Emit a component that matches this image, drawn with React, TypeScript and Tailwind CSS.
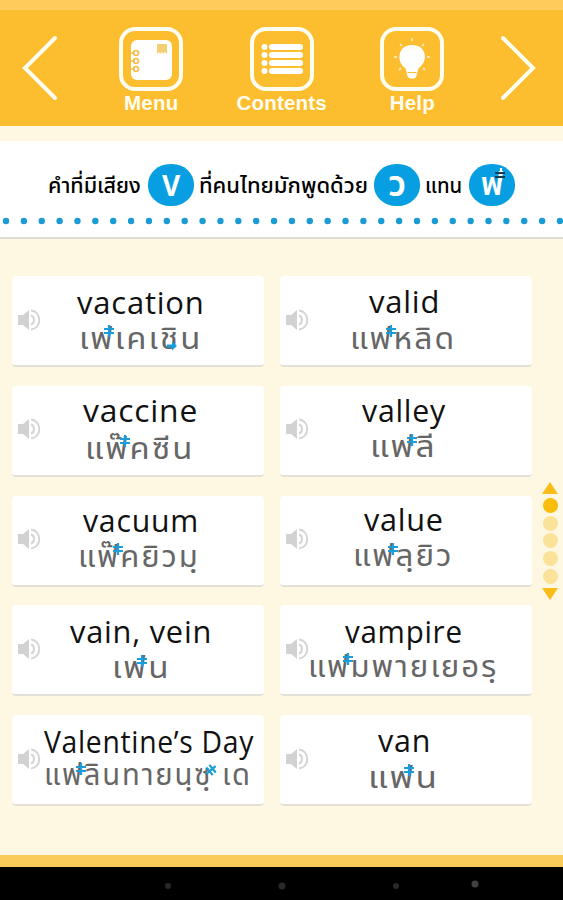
import { useLayoutEffect, useRef, useState } from "react";

interface Mark {
  x: number;
  y: number;
  kind?: "arrow" | "tilted";
}

interface Word {
  en: string;
  enX: number;
  enWidth: number;
  enTop: number;
  th: string;
  thX: number;
  thWidth: number;
  thTop: number;
  marks: Mark[];
}

// x and top values are relative to the card
const leftWords: Word[] = [
  {
    en: "vacation", enX: 65, enWidth: 128, enTop: 9,
    th: "เฟเคเชิน", thX: 67, thWidth: 123, thTop: 49,
    marks: [{ x: 97, y: 54 }, { x: 160, y: 69, kind: "arrow" }],
  },
  {
    en: "vaccine", enX: 71, enWidth: 115, enTop: 7,
    th: "แฟ๊คซีน", thX: 73, thWidth: 109, thTop: 49,
    marks: [{ x: 113, y: 54 }],
  },
  {
    en: "vacuum", enX: 71, enWidth: 116, enTop: 7,
    th: "แฟ๊คยิวมฺ", thX: 66, thWidth: 122, thTop: 47,
    marks: [{ x: 106, y: 52 }],
  },
  {
    en: "vain, vein", enX: 58, enWidth: 142, enTop: 9,
    th: "เฟน", thX: 100, thWidth: 59, thTop: 49,
    marks: [{ x: 130, y: 55 }],
  },
  {
    en: "Valentine’s Day", enX: 32, enWidth: 210, enTop: 9,
    th: "แฟลินทายนฺซฺ เด", thX: 32, thWidth: 208, thTop: 46,
    marks: [{ x: 69, y: 53 }, { x: 199, y: 54, kind: "tilted" }],
  },
];

const rightWords: Word[] = [
  {
    en: "valid", enX: 89, enWidth: 71, enTop: 8,
    th: "แฟหลิด", thX: 70, thWidth: 106, thTop: 49,
    marks: [{ x: 111, y: 54 }],
  },
  {
    en: "valley", enX: 82, enWidth: 84, enTop: 7,
    th: "แฟลี", thX: 90, thWidth: 67, thTop: 47,
    marks: [{ x: 132, y: 53 }],
  },
  {
    en: "value", enX: 84, enWidth: 80, enTop: 6,
    th: "แฟลฺยิว", thX: 73, thWidth: 101, thTop: 46,
    marks: [{ x: 113, y: 52 }],
  },
  {
    en: "vampire", enX: 65, enWidth: 118, enTop: 9,
    th: "แฟมพายเยอรฺ", thX: 28, thWidth: 190, thTop: 48,
    marks: [{ x: 68, y: 53 }],
  },
  {
    en: "van", enX: 98, enWidth: 53, enTop: 8,
    th: "แฟน", thX: 88, thWidth: 71, thTop: 49,
    marks: [{ x: 129, y: 54 }],
  },
];

// stretches a line of text to a given width
function FitText({ text, width }: { text: string; width: number }) {
  const ref = useRef<HTMLSpanElement>(null);
  const [scale, setScale] = useState(1);

  useLayoutEffect(() => {
    if (ref.current) setScale(width / ref.current.offsetWidth);
  }, [text, width]);

  return (
    <span className="block" style={{ width }}>
      <span
        ref={ref}
        className="inline-block origin-left whitespace-nowrap"
        style={{ transform: `scaleX(${scale})` }}
      >
        {text}
      </span>
    </span>
  );
}

function ToneMark({ x, y, kind }: Mark) {
  return (
    <svg
      className="absolute h-[13px] w-3 -translate-x-1/2"
      style={{ left: x, top: y - 5 }}
      viewBox="0 0 12 13"
      fill="none"
      stroke="#1a9dd9"
      strokeWidth="2.2"
    >
      {kind === "arrow" ? (
        <path d="M1 4.500h5V1.500l5 4.500-5 4.500V7.500H1z" fill="#1a9dd9" stroke="none" />
      ) : (
        <path
          d="M6 0v12M1 4h10M1 8h10"
          transform={kind === "tilted" ? "rotate(50 6 6)" : undefined}
        />
      )}
    </svg>
  );
}

function Speaker() {
  return (
    <svg className="h-[22px] w-[23px]" viewBox="0 0 23 22" fill="none">
      <path d="M0 6h5l6-5v20l-6-5H0z" fill="#d2d2d2" />
      <path
        d="M13 1.5c11 1 11 18 0 19M13 6.5c4 1 4 8 0 9"
        stroke="#d5d5d5"
        strokeWidth="2"
      />
    </svg>
  );
}

function WordCard({ word }: { word: Word }) {
  return (
    <div className="relative flex h-[91px] items-center rounded-sm border-b-2 border-[#e3e0d8] bg-white pb-0.5 pl-1.5">
      <Speaker />
      <div
        className="absolute font-['Open_Sans',sans-serif] text-[31px] leading-[34px] font-medium tracking-wide text-[#111]"
        style={{ left: word.enX, top: word.enTop }}
      >
        <FitText text={word.en} width={word.enWidth} />
      </div>
      <div
        className="absolute font-['Noto_Sans_Thai','Noto_Sans',sans-serif] text-[31px] leading-[30px] tracking-[2px] text-[#666]"
        style={{ left: word.thX, top: word.thTop }}
      >
        <FitText text={word.th} width={word.thWidth} />
      </div>
      {word.marks.map((mark) => (
        <ToneMark key={mark.x} {...mark} />
      ))}
    </div>
  );
}

function Arrow({ flip }: { flip?: boolean }) {
  return (
    <svg
      className={flip ? "h-[66px] w-9 -scale-x-100" : "h-[66px] w-9"}
      viewBox="0 0 36 66"
      fill="none"
      stroke="#fffdf0"
      strokeWidth="4"
      strokeLinecap="round"
    >
      <path d="M33 3 3 33l30 30" />
    </svg>
  );
}

function NavButton({ label, children }: { label: string; children: React.ReactNode }) {
  return (
    <button className="flex w-[130.500px] flex-col items-center">
      <svg className="h-16 w-16" viewBox="0 0 64 64" fill="none">
        <rect x="2" y="2" width="60" height="60" rx="14" stroke="#fffdf0" strokeWidth="4" />
        {children}
      </svg>
      <span className="font-['Liberation_Sans',sans-serif] text-[20.500px] leading-[23px] font-bold tracking-[0.2px] text-[#fffdf0]">
        {label}
      </span>
    </button>
  );
}

function Bubble({ children }: { children: React.ReactNode }) {
  return (
    <span className="relative flex h-[42px] w-[46px] shrink-0 items-center justify-center rounded-[48%] bg-[#079fe2] text-white">
      {children}
    </span>
  );
}

export default function App() {
  return (
    <main className="flex h-[900px] w-[563px] flex-col overflow-hidden bg-[#fef7e2]">
      <div className="h-2.5 bg-[#ffcc5c]" />
      <header className="flex h-[116px] items-start bg-[#fcbd2f] pt-[17px]">
        <div className="flex w-[86px] pt-2 pl-[22px]">
          <Arrow />
        </div>
        <NavButton label="Menu">
          <rect x="12" y="13" width="41" height="40" rx="6" fill="#fff" />
          <path d="M38 17h10v10l-2-2-2 2-1-2-2 2-1-2-2 2z" fill="#f5ce75" />
          <g stroke="#f3bd4c" strokeWidth="1.6">
            <circle cx="17" cy="26" r="2.5" />
            <circle cx="17" cy="34" r="2.5" />
            <circle cx="17" cy="42" r="2.5" />
            <path d="M11 26h5M11 34h5M11 42h5" />
          </g>
        </NavButton>
        <NavButton label="Contents">
          <g stroke="#fff" strokeWidth="6" strokeLinecap="round">
            <path d="M14.500 20h.01M22 20h28M14.500 28h.01M22 28h28M14.500 36h.01M22 36h28M14.500 44h.01M22 44h28" />
          </g>
        </NavButton>
        <NavButton label="Help">
          <path
            d="M32 18c-15 0-15 17-8 22 3 2 2 6 4 10 2 2 7 2 8 0 2-4 1-8 4-10 8-6 7-22-8-22z"
            fill="#fff"
          />
          <path d="M27.500 45.500h9" stroke="#fcbd2f" strokeWidth="1" />
          <path
            d="M32 11v3M20 17l2 2M44 17l-2 2M14 30h3M47 30h3M19 43l2-2M45 43l-2-2"
            stroke="#fde7b0"
            strokeWidth="1.800"
          />
        </NavButton>
        <div className="flex pt-2 pl-[22.500px]">
          <Arrow flip />
        </div>
      </header>

      <section className="mt-[15px] flex h-[98px] shrink-0 flex-col border-b-2 border-[#dfdcd8] bg-white font-['Noto_Sans_Thai','Noto_Sans',sans-serif]">
        <h1 className="flex h-[65px] items-end pl-12 text-[22px] leading-[46px] font-medium text-black">
          <span className="mr-[7px] h-[42px]"><FitText text="คำที่มีเสียง" width={93} /></span>
          <Bubble>
            <span className="font-['Open_Sans',sans-serif] text-[28px] leading-[42px] font-bold">V</span>
          </Bubble>
          <span className="mr-[6px] ml-[5px] h-[42px]"><FitText text="ที่คนไทยมักพูดด้วย" width={169} /></span>
          <Bubble>
            <span className="text-[36px] leading-[38px] font-semibold">ว</span>
          </Bubble>
          <span className="mr-[7px] ml-[5px] h-[42px]"><FitText text="แทน" width={37} /></span>
          <Bubble>
            <span className="text-[32px] leading-[42px] font-semibold">ฟ</span>
            <svg className="absolute top-1 right-[9px] h-3.5 w-3" viewBox="0 0 12 14" stroke="#173b50" strokeWidth="2.200">
              <path d="M7 0v13" stroke="#fff" />
              <path d="M1 5h10M1 9h10" />
            </svg>
          </Bubble>
        </h1>
        <svg className="mt-[11px] h-2 w-full" viewBox="0 0 563 8">
          {Array.from({ length: 32 }, (_, i) => (
            <circle key={i} cx={6 + i * 17.87} cy="4" r="3.200" fill="#1b9bd4" />
          ))}
        </svg>
      </section>

      <section className="flex grow pt-[37px] pl-3">
        <div className="mr-4 flex w-[252px] flex-col gap-[18.75px]">
          {leftWords.map((word) => (
            <WordCard key={word.en} word={word} />
          ))}
        </div>
        <div className="flex w-[252px] flex-col gap-[18.75px]">
          {rightWords.map((word) => (
            <WordCard key={word.en} word={word} />
          ))}
        </div>
        <nav className="mt-[206px] ml-2.5 flex w-4 flex-col items-center">
          <svg className="h-[12px] w-4" viewBox="0 0 16 12">
            <path d="M8 0 16 12H0z" fill="#f8bd18" />
          </svg>
          <div className="my-[4px] flex flex-col gap-[2.700px]">
            <span className="h-[15px] w-[15px] rounded-full bg-[#fabd0c]" />
            <span className="h-[15px] w-[15px] rounded-full bg-[#fbe299]" />
            <span className="h-[15px] w-[15px] rounded-full bg-[#fbe299]" />
            <span className="h-[15px] w-[15px] rounded-full bg-[#fbe299]" />
            <span className="h-[15px] w-[15px] rounded-full bg-[#fbe299]" />
          </div>
          <svg className="h-[12px] w-4" viewBox="0 0 16 12">
            <path d="M0 0h16L8 12z" fill="#f8bd18" />
          </svg>
        </nav>
      </section>

      <div className="h-3 shrink-0 bg-[#fbcb5a]" />
      <footer className="h-[33px] shrink-0 bg-black">
        <svg className="h-full w-full" viewBox="0 0 563 33" fill="#292929">
          <circle cx="168" cy="19" r="3" />
          <circle cx="282" cy="19" r="3.500" />
          <circle cx="396" cy="19" r="3" />
          <circle cx="475" cy="17" r="3.500" fill="#414141" />
        </svg>
      </footer>
    </main>
  );
}
